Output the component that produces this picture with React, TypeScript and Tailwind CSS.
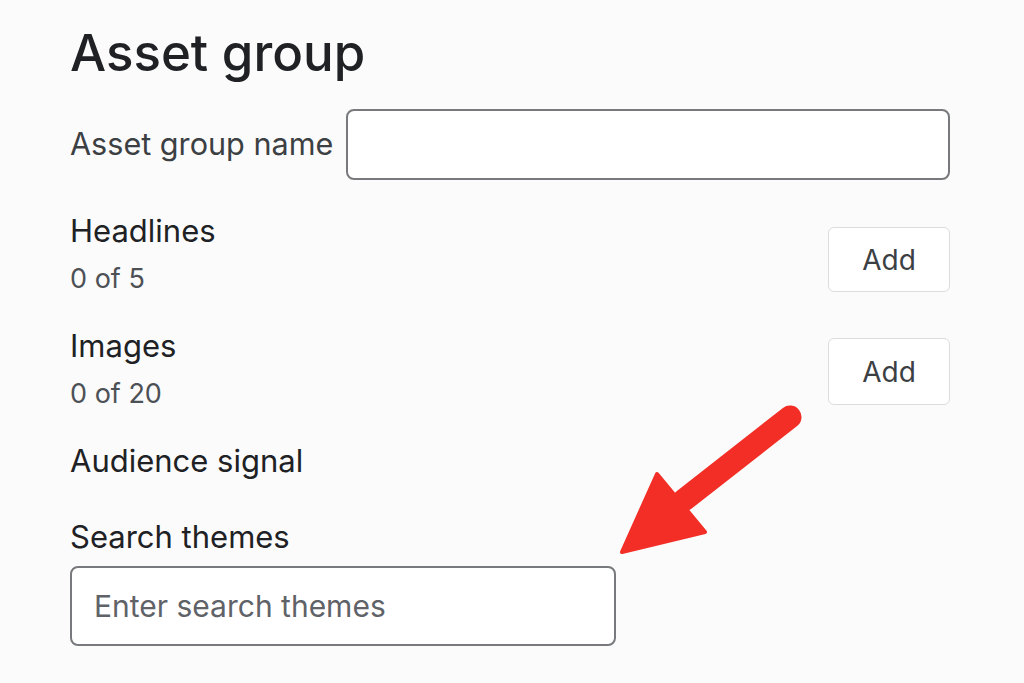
import React from "react";

export default function App() {
  return (
    <div className="relative min-h-[683px] w-full overflow-hidden bg-[#fbfbfb] font-['Inter','Roboto',sans-serif]">
      <div className="ml-[70px] w-[880px] pt-[27px]">
        <h1 className="text-[51px] font-medium leading-none text-[#202124]">Asset group</h1>

        <div className="mt-[31px] flex items-center gap-[13px]">
          <label className="text-[30.6px] leading-none text-[#3c4043]">Asset group name</label>
          <input
            type="text"
            className="h-[71px] flex-1 rounded-[8px] border-2 border-[#77797c] bg-white px-[20px] text-[30px] outline-none"
          />
        </div>

        <div className="mt-[35px] flex items-start justify-between">
          <div>
            <div className="text-[31px] leading-none text-[#202124]">Headlines</div>
            <div className="mt-[19px] text-[27px] leading-none text-[#4d5156]">0 of 5</div>
          </div>
          <button className="mt-[12px] h-[65px] w-[122px] rounded-[6px] border-[1.5px] border-[#dadce0] bg-white text-[28px] leading-none text-[#3c4043]">
            Add
          </button>
        </div>

        <div className="mt-[38px] flex items-start justify-between">
          <div>
            <div className="text-[31px] leading-none text-[#202124]">Images</div>
            <div className="mt-[19px] text-[27px] leading-none text-[#4d5156]">0 of 20</div>
          </div>
          <button className="mt-[8px] h-[67px] w-[122px] rounded-[6px] border-[1.5px] border-[#dadce0] bg-white text-[28px] leading-none text-[#3c4043]">
            Add
          </button>
        </div>

        <div className="mt-[38px] text-[31px] leading-none text-[#202124]">Audience signal</div>

        <div className="mt-[45px] text-[31px] leading-none text-[#202124]">Search themes</div>

        <input
          type="text"
          placeholder="Enter search themes"
          className="mt-[14px] block h-[80px] w-[546px] rounded-[8px] border-2 border-[#77797c] bg-white px-[22px] text-[30px] text-[#202124] outline-none placeholder:text-[#5f6368]"
        />
      </div>

      <svg
        className="pointer-events-none absolute left-0 top-0"
        width="1024"
        height="683"
        viewBox="0 0 1024 683"
      >
        <line x1="790" y1="417" x2="684" y2="500" stroke="#f22e26" strokeWidth="23" strokeLinecap="round" />
        <polygon
          points="657,474 705,532 622,552"
          fill="#f22e26"
          stroke="#f22e26"
          strokeWidth="4"
          strokeLinejoin="round"
        />
      </svg>
    </div>
  );
}
